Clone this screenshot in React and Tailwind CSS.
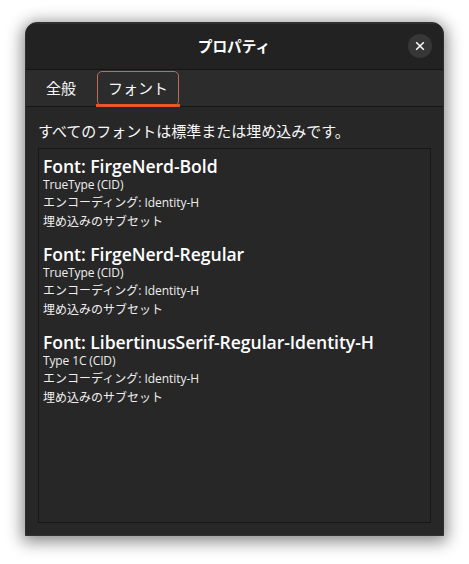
const fonts = [
  { name: 'FirgeNerd-Bold', type: 'TrueType (CID)' },
  { name: 'FirgeNerd-Regular', type: 'TrueType (CID)' },
  { name: 'LibertinusSerif-Regular-Identity-H', type: 'Type 1C (CID)' },
];

function FontEntry({ font }) {
  return (
    <li className="h-[88px] whitespace-nowrap text-[12px] text-[#eeeeee]">
      <h2 className="h-[19px] text-[17.6px] leading-[18px] font-semibold tracking-[-0.06px] text-white">
        Font: {font.name}
      </h2>
      <p className="h-[18px] leading-[18px] tracking-[-0.13px]">{font.type}</p>
      <p className="h-[18px] leading-[18px]">
        エンコーディング<span className="tracking-[-0.03px]">: Identity-H</span>
      </p>
      <p className="h-[18px] leading-[19px]">埋め込みのサブセット</p>
    </li>
  );
}

export default function App() {
  return (
    <div className="h-[564px] w-[469px] overflow-hidden bg-white pt-[22px] pl-[25px] font-['Open_Sans','Noto_Sans_CJK_JP',sans-serif]">
      <section className="flex h-[514px] w-[419px] flex-col overflow-hidden rounded-t-[12px] border border-[#303030] bg-[#272727] text-[15px] text-[#f7f7f7] shadow-[0_3px_16px_3px_rgba(0,0,0,0.46)]">
        <header className="grid h-[47px] shrink-0 grid-cols-[35px_1fr_36px] items-center border-b border-[#151515] bg-[#222222] shadow-[inset_0_1px_0_#303030]">
          <span />
          <h1 className="text-center text-[14.67px] leading-[22px] font-bold text-white">プロパティ</h1>
          <button aria-label="閉じる" className="ml-px flex size-6 items-center justify-center rounded-full bg-[#373737] text-white">
            <svg width="10" height="10" viewBox="0 0 10 10" fill="none" stroke="currentColor" strokeWidth="1.5">
              <path d="M1.2 1.2 8.8 8.8M8.8 1.2 1.2 8.8" />
            </svg>
          </button>
        </header>
        <nav className="flex h-[37px] shrink-0 border-b border-[#151515] bg-[#2c2c2c]">
          <button className="h-[36px] w-[70px] pb-px text-center leading-[34px]">全般</button>
          <button className="-mb-px h-[37px] w-[84px] border-b-[3px] border-[#e95420] px-px pt-px">
            <span className="-mb-[2px] block h-[35px] rounded-[5px] border border-[#bd6e55] text-center leading-[33px]">フォント</span>
          </button>
        </nav>
        <main className="flex flex-1 flex-col px-3 pb-3">
          <p className="h-[41px] pt-[13px] leading-[22px] whitespace-nowrap">すべてのフォントは標準または埋め込みです。</p>
          <ul className="flex-1 border border-[#171717] pt-[8px] pl-1">
            {fonts.map((font) => <FontEntry key={font.name} font={font} />)}
          </ul>
        </main>
      </section>
    </div>
  );
}
